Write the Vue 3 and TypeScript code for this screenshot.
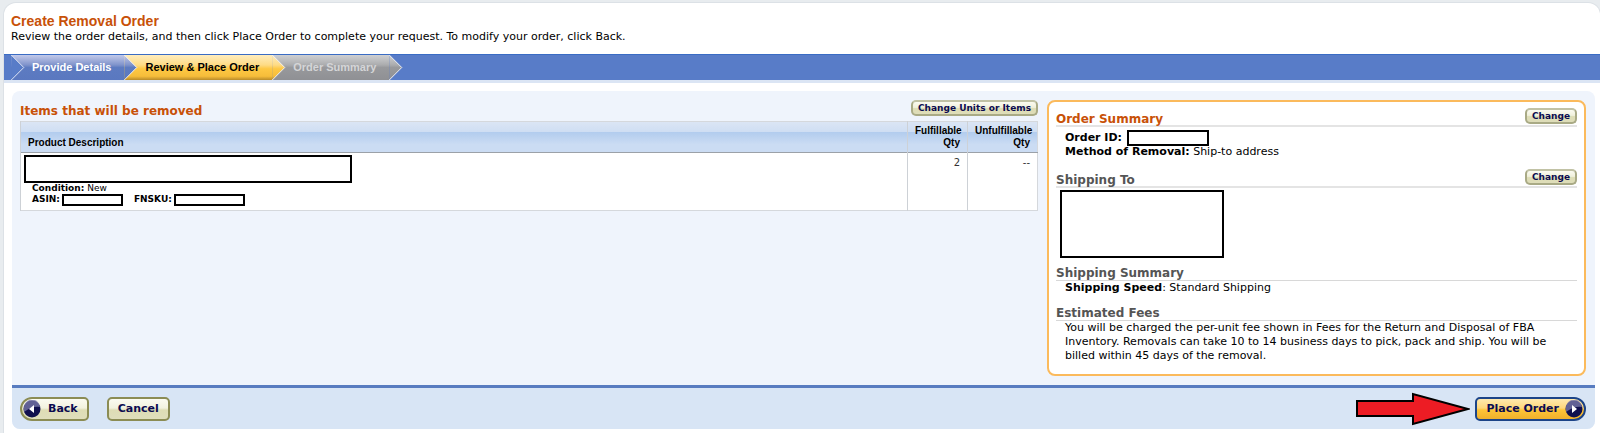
<script setup lang="ts">
interface Step {
  label: string
  state: 'done' | 'current' | 'upcoming'
}

const steps: Step[] = [
  { label: 'Provide Details', state: 'done' },
  { label: 'Review & Place Order', state: 'current' },
  { label: 'Order Summary', state: 'upcoming' },
]

const fees =
  'You will be charged the per-unit fee shown in Fees for the Return and Disposal of FBA Inventory. Removals can take 10 to 14 business days to pick, pack and ship. You will be billed within 45 days of the removal.'
</script>

<template>
  <main class="page">
    <header class="intro">
      <h1>Create Removal Order</h1>
      <p>Review the order details, and then click Place Order to complete your request. To modify your order, click Back.</p>
    </header>

    <svg class="defs" width="0" height="0" aria-hidden="true">
      <defs>
        <linearGradient id="fill-done" x1="0" y1="0" x2="0" y2="1">
          <stop offset="0" stop-color="#c3caea" />
          <stop offset="0.4" stop-color="#7f93cb" />
          <stop offset="0.5" stop-color="#5d7bc1" />
          <stop offset="1" stop-color="#5a78c0" />
        </linearGradient>
        <linearGradient id="fill-current" x1="0" y1="0" x2="0" y2="1">
          <stop offset="0" stop-color="#ffedbe" />
          <stop offset="0.4" stop-color="#fedb85" />
          <stop offset="0.55" stop-color="#fec844" />
          <stop offset="0.85" stop-color="#f6bd3a" />
          <stop offset="1" stop-color="#b98b2a" />
        </linearGradient>
        <linearGradient id="fill-upcoming" x1="0" y1="0" x2="0" y2="1">
          <stop offset="0" stop-color="#cfd0d2" />
          <stop offset="0.4" stop-color="#abacae" />
          <stop offset="0.5" stop-color="#98999c" />
          <stop offset="1" stop-color="#8f9094" />
        </linearGradient>
      </defs>
    </svg>

    <nav aria-label="Order progress">
      <ol class="steps">
        <li class="lead" aria-hidden="true">
          <svg class="tip" viewBox="0 0 14 26"><path d="M0 0 13 13 0 26z" fill="#587cc8" /><path d="M0 0 13 13 0 26" fill="none" stroke="#e4e9f6" /></svg>
        </li>
        <li v-for="step in steps" :key="step.label" :class="step.state" :aria-current="step.state === 'current' ? 'step' : undefined">
          {{ step.label }}
          <svg class="tip" viewBox="0 0 14 26" aria-hidden="true">
            <path d="M0 0 13 13 0 26z" :fill="`url(#fill-${step.state})`" />
            <path d="M0 0 13 13 0 26" fill="none" stroke="#f4f4f6" />
          </svg>
        </li>
      </ol>
    </nav>

    <div class="panel">
      <div class="content">
        <section class="items">
          <div class="items-head">
            <h2>Items that will be removed</h2>
            <button type="button" class="small">Change Units or Items</button>
          </div>
          <table>
            <thead>
              <tr>
                <th scope="col">Product Description</th>
                <th scope="col" class="qty">Fulfillable Qty</th>
                <th scope="col" class="qty wide">Unfulfillable Qty</th>
              </tr>
            </thead>
            <tbody>
              <tr>
                <td>
                  <div class="blank product"></div>
                  <div class="meta"><b>Condition:</b> New</div>
                  <div class="meta codes">
                    <b>ASIN:</b><span class="blank asin"></span>
                    <b>FNSKU:</b><span class="blank fnsku"></span>
                  </div>
                </td>
                <td class="qty">2</td>
                <td class="qty">--</td>
              </tr>
            </tbody>
          </table>
        </section>

        <aside class="summary">
          <section class="order">
            <div class="bar">
              <h2>Order Summary</h2>
              <button type="button" class="small">Change</button>
            </div>
            <div class="body">
              <p class="line"><b>Order ID:</b><span class="blank order-id"></span></p>
              <p><b>Method of Removal:</b> Ship-to address</p>
            </div>
          </section>
          <section class="shipping">
            <div class="bar">
              <h3>Shipping To</h3>
              <button type="button" class="small">Change</button>
            </div>
            <div class="blank address"></div>
          </section>
          <section class="speed">
            <div class="bar"><h3>Shipping Summary</h3></div>
            <div class="body"><p><b>Shipping Speed</b>: Standard Shipping</p></div>
          </section>
          <section>
            <div class="bar"><h3>Estimated Fees</h3></div>
            <div class="body"><p>{{ fees }}</p></div>
          </section>
        </aside>
      </div>

      <footer>
        <button type="button" class="large back">
          <svg viewBox="0 0 18 18" aria-hidden="true">
            <circle cx="9" cy="9" r="8.5" fill="#10104e" />
            <path d="M1 8a8 8 0 0 1 16-1Q9 6 1 12z" fill="#7c7cae" opacity=".75" />
            <path d="M11 5v8L6 9z" fill="#fff" />
          </svg>
          Back
        </button>
        <button type="button" class="large cancel">Cancel</button>
        <svg class="arrow" viewBox="0 0 114 34" aria-hidden="true">
          <path d="M1 9H57V2L112 17 57 32V24H1z" fill="#ed1c24" stroke="#000" stroke-width="2" />
        </svg>
        <button type="button" class="large place">
          Place Order
          <svg viewBox="0 0 18 18" aria-hidden="true">
            <circle cx="9" cy="9" r="8.5" fill="#10104e" />
            <path d="M1 8a8 8 0 0 1 16-1Q9 6 1 12z" fill="#7c7cae" opacity=".75" />
            <path d="M7 5v8l5-4z" fill="#fff" />
          </svg>
        </button>
      </footer>
    </div>
  </main>
</template>

<style>
body {
  background: #e8ecef;
}
</style>

<style scoped>
* {
  box-sizing: border-box;
}
.page {
  margin: 3px 0 0 4px;
  padding-bottom: 4px;
  background: #fff;
  box-shadow: 0 0 0 1px #dce1e6;
  border-radius: 12px 12px 0 0;
  color: #000;
  font: 11px/14px Verdana, "DejaVu Sans", sans-serif;
}
h1, h2, h3, p, ol {
  margin: 0;
  padding: 0;
}
.intro {
  padding: 10px 7px;
}
h1 {
  color: #c85108;
  font: bold 14px/16px "Liberation Sans", Arial, sans-serif;
}
.intro p {
  line-height: 15px;
}
.defs {
  display: block;
}
.steps {
  display: flex;
  height: 29px;
  list-style: none;
  background: #587cc8;
  border-top: 1px solid #3a6cc4;
  border-bottom: 3px solid #dbe5f4;
  font: bold 11px/24px "Liberation Sans", Arial, sans-serif;
}
.steps li {
  position: relative;
  padding: 0 13px 0 21px;
}
.steps .lead {
  z-index: 4;
  padding: 0 0 0 7px;
}
.steps .done {
  z-index: 3;
  color: #fff;
  background: linear-gradient(#c3caea, #7f93cb 40%, #5d7bc1 50%, #5a78c0);
}
.steps .current {
  z-index: 2;
  background: linear-gradient(#ffedbe, #fedb85 40%, #fec844 55%, #f6bd3a 85%, #b98b2a);
}
.steps .upcoming {
  z-index: 1;
  color: #d4d5d7;
  background: linear-gradient(#cfd0d2, #abacae 40%, #98999c 50%, #8f9094);
}
.tip {
  position: absolute;
  top: 0;
  left: 100%;
  width: 14px;
  height: 25px;
}
.panel {
  margin: 8px 5px 0 8px;
  overflow: hidden;
  border-radius: 8px;
  background: #eff4fc;
}
.content {
  display: grid;
  grid-template-columns: minmax(0, 1018fr) minmax(0, 539fr);
  gap: 9px;
  align-items: start;
  padding: 9px 9px 9px 8px;
}
.items-head {
  display: flex;
  justify-content: space-between;
  align-items: flex-start;
  height: 21px;
}
h2, h3 {
  font-size: 12px;
  line-height: 14px;
}
h2 {
  color: #c85108;
}
h3 {
  color: #555;
}
.items-head h2 {
  line-height: 22px;
}
button {
  color: #0b0b50;
  font: bold 11px/14px Verdana, "DejaVu Sans", sans-serif;
  white-space: nowrap;
}
.small {
  height: 16px;
  padding: 0 5px;
  border: 2px solid #a9aa85;
  border-top-color: #c1c2a5;
  border-radius: 5px;
  background: linear-gradient(#fbfbf1, #f0f0db 45%, #deddb5 55%, #deddb9);
  font-size: 9px;
  line-height: 11px;
}
table {
  width: 100%;
  table-layout: fixed;
  border: 1px solid #d5d8dc;
  border-collapse: collapse;
  background: #fff;
}
thead tr {
  height: 31px;
  background: linear-gradient(#dbe5f4, #cfdef3 33%, #b2ccee 34%, #cbdcf3 75%);
  border-bottom: 1px solid #9ba1a8;
}
th {
  padding: 3px 7px;
  border-left: 1px solid #cdd1d6;
  font: bold 10px/12px "Liberation Sans", Arial, sans-serif;
  text-align: left;
  vertical-align: bottom;
}
td {
  height: 58px;
  padding: 2px 3px 0;
  border-left: 1px solid #cdd1d6;
  vertical-align: top;
}
th.qty, td.qty {
  width: 60px;
  padding-right: 7px;
  text-align: right;
}
th.wide {
  width: 70px;
}
td.qty {
  color: #333;
  font-size: 10px;
  line-height: 16px;
}
.blank {
  display: block;
  flex: none;
  border: 2px solid #000;
  background: #fff;
}
.product {
  width: 328px;
  height: 28px;
}
.meta {
  padding-left: 8px;
  font-size: 9px;
  line-height: 11px;
}
.codes {
  display: flex;
  align-items: center;
  height: 11px;
}
.asin {
  width: 61px;
  height: 12px;
  margin: 0 11px 0 2px;
}
.fnsku {
  width: 71px;
  height: 12px;
  margin-left: 2px;
}
.summary {
  padding: 6px 7px 11px;
  border: 2px solid #fbba5c;
  border-radius: 8px;
  background: #fff;
}
.bar {
  display: flex;
  justify-content: space-between;
  align-items: flex-start;
  border-bottom: 1px solid #d8d8d8;
}
.order .bar, .shipping .bar {
  height: 19px;
  border-bottom: 2px solid #e4e4e4;
}
.order .bar h2, .shipping .bar h3 {
  padding-top: 4px;
}
.body {
  padding: 0 9px;
}
.order .body {
  padding-top: 4px;
}
.line {
  display: flex;
  align-items: center;
}
.order-id {
  width: 82px;
  height: 16px;
  margin: -1px 0 -1px 5px;
}
.order {
  padding-bottom: 10px;
}
.address {
  width: 164px;
  height: 68px;
  margin: 2px 0 8px 4px;
}
.speed {
  padding-bottom: 11px;
}
footer {
  display: flex;
  align-items: center;
  height: 44px;
  padding: 0 9px 0 8px;
  border-top: 3px solid #587cc0;
  background: #d8e5f5;
}
.large {
  display: flex;
  align-items: center;
  height: 24px;
  padding: 0 9px;
  border: 2px solid #8b8c54;
  border-radius: 5px;
  background: linear-gradient(#fbfbf1, #f2f2df 45%, #deddb5 55%, #dfdebc);
}
.large svg {
  width: 18px;
  height: 18px;
}
.back {
  gap: 7px;
  padding-left: 1px;
  border-radius: 12px 5px 5px 12px;
}
.cancel {
  margin-left: 18px;
}
.arrow {
  width: 114px;
  height: 34px;
  margin: 0 5px 0 auto;
}
.place {
  gap: 6px;
  padding-right: 1px;
  border-color: #1c4488;
  border-radius: 5px 12px 12px 5px;
  background: linear-gradient(#ffe9ae, #fed77c 45%, #fdc437 55%, #f0b02c);
}
</style>
